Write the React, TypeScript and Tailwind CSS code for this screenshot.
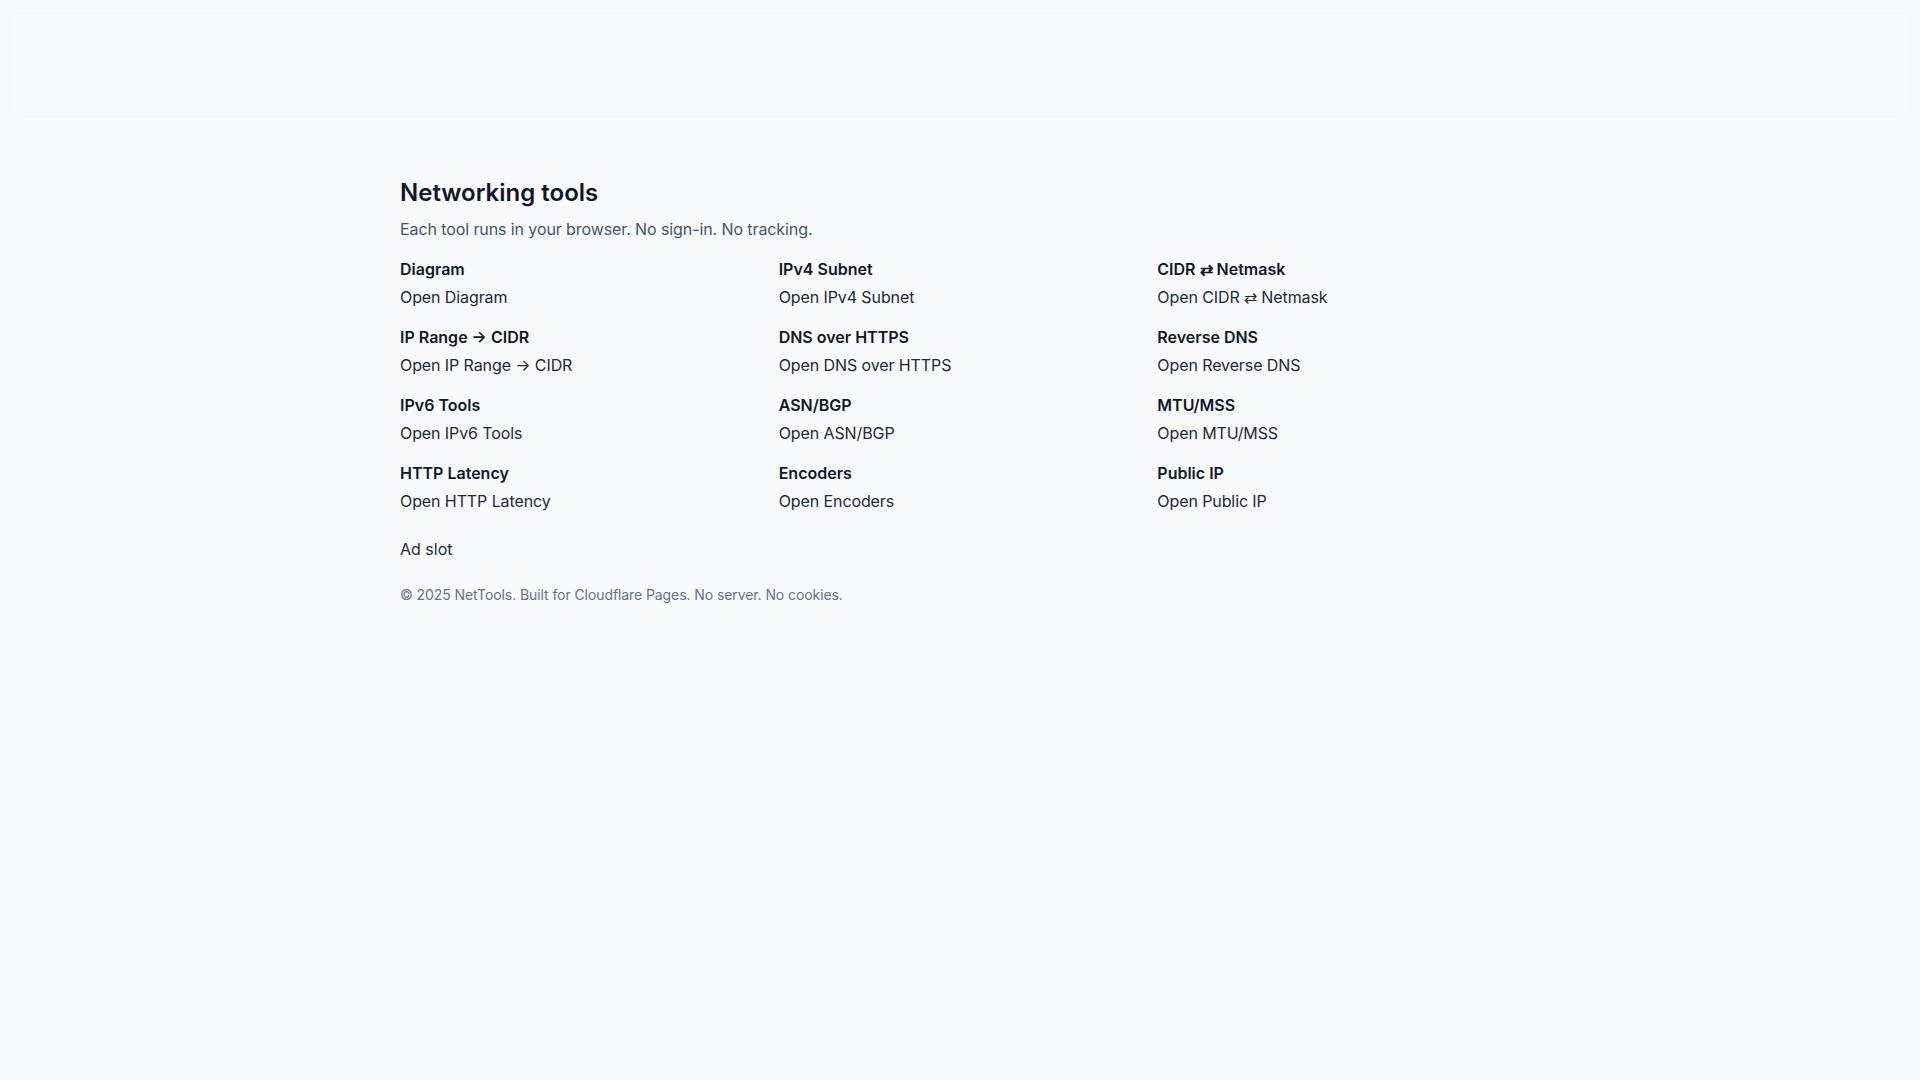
import React from "react";

const tools: string[] = [
  "Diagram",
  "IPv4 Subnet",
  "CIDR ⇄ Netmask",
  "IP Range → CIDR",
  "DNS over HTTPS",
  "Reverse DNS",
  "IPv6 Tools",
  "ASN/BGP",
  "MTU/MSS",
  "HTTP Latency",
  "Encoders",
  "Public IP",
];

export default function App() {
  return (
    <div
      className="min-h-screen bg-[#f8fafc] text-slate-900"
      style={{ fontFamily: "Inter, 'Noto Sans', sans-serif" }}
    >
      {/* Header (empty bar) */}
      <div className="mx-3.5 pt-2.5">
        <div className="h-[110px] rounded-sm border border-[#fcfdfe] shadow-[0_1px_2px_rgba(15,23,42,0.012)]" />
      </div>

      <main className="max-w-6xl mx-auto px-4 pt-[57px]">
        <h1 className="text-2xl font-semibold text-[#0f172a]">Networking tools</h1>
        <p className="mt-2 text-base tracking-[-0.006em] text-slate-600">
          Each tool runs in your browser. No sign-in. No tracking.
        </p>

        {/* Tool grid */}
        <div className="mt-4 grid grid-cols-3 gap-4">
          {tools.map((name) => (
            <div key={name} className="flex flex-col gap-1">
              <div className="text-base font-semibold text-[#0f172a]">{name}</div>
              <a href="#" className="text-base tracking-[-0.006em] text-[#1e293b]">
                Open {name}
              </a>
            </div>
          ))}
        </div>

        <div className="mt-6 text-base text-[#1e293b]">Ad slot</div>

        <footer className="mt-6 text-sm tracking-[-0.006em] text-slate-500">
          © 2025 NetTools. Built for Cloudflare Pages. No server. No cookies.
        </footer>
      </main>
    </div>
  );
}
